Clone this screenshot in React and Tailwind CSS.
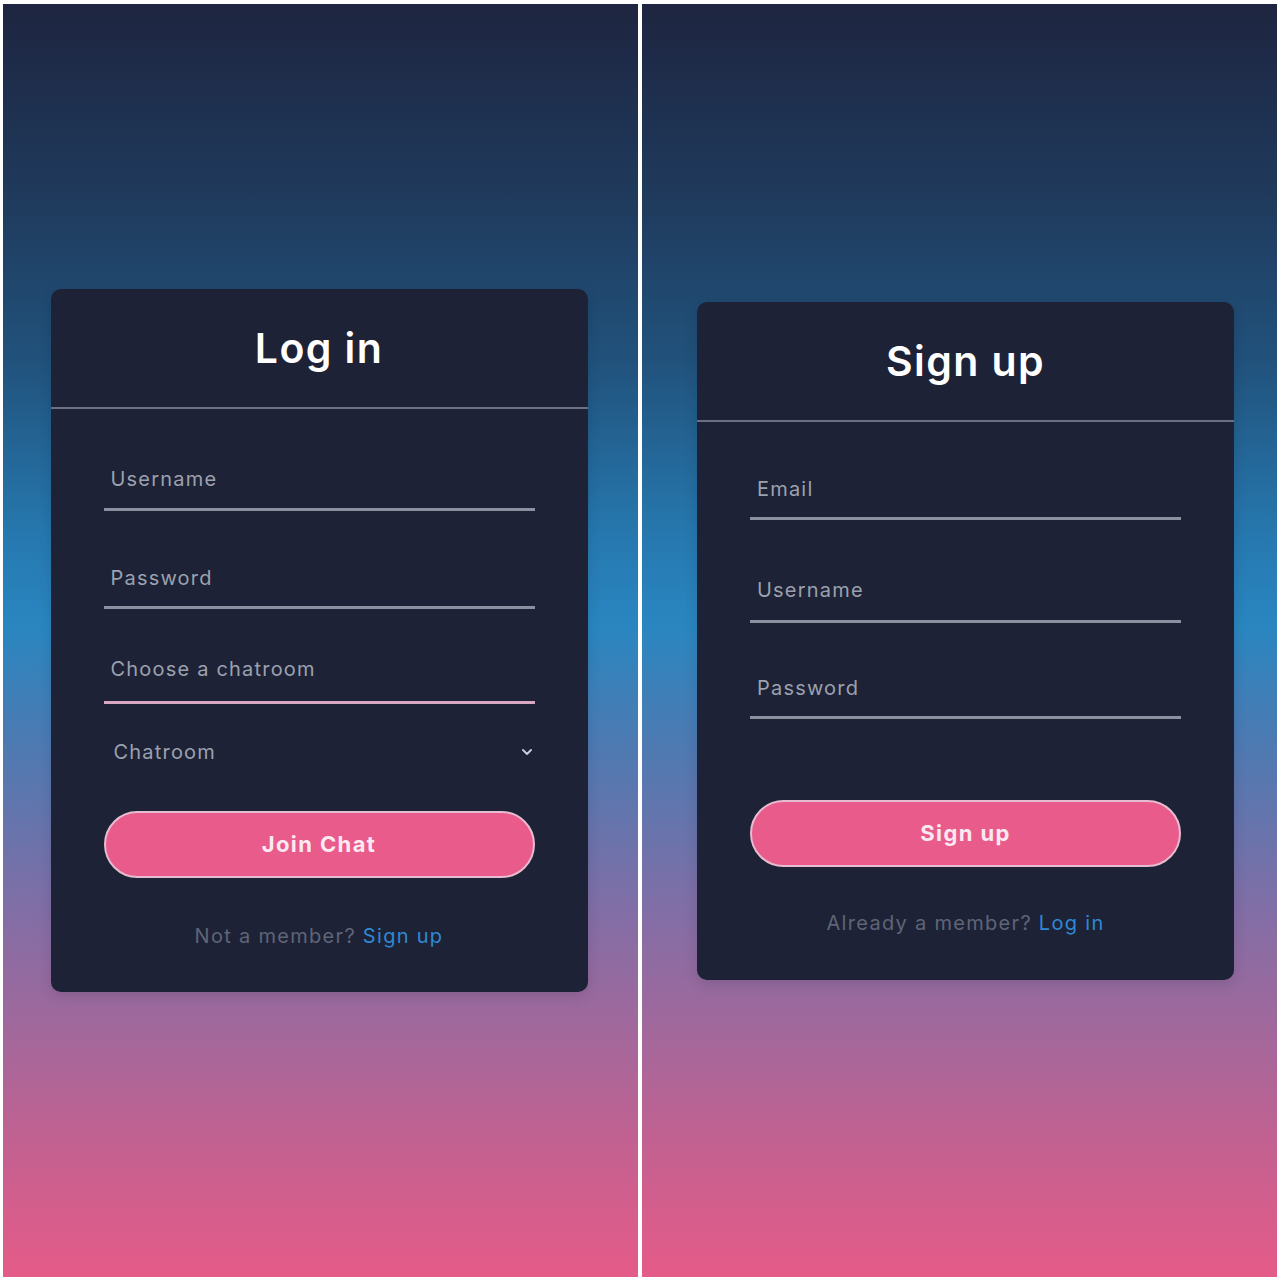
import { ChevronDown } from 'lucide-react'

const font = { fontFamily: 'Inter, "Noto Sans", sans-serif' }

function Field({ label, line = 'border-[#8b91a0]', className = '' }) {
  return (
    <div className={`pl-[7px] pb-[14px] border-b-[3px] ${line} ${className}`}>
      <span className="block text-[20px] leading-[28px] text-[#9ba1ae] tracking-[1.2px]">{label}</span>
    </div>
  )
}

function Panel({ children }) {
  return (
    <div className="flex-1 h-full flex items-center justify-center bg-[linear-gradient(to_bottom,#1e2540_0%,#1f3a5c_15%,#21527c_28%,#2679b0_42%,#2a86c0_49%,#4d7ab2_58%,#7d6fa7_70%,#a7679a_82%,#c8608f_91%,#e55b88_100%)]">
      {children}
    </div>
  )
}

function Card({ title, children, className = '' }) {
  return (
    <div className={`w-[537px] bg-[#1e2236] rounded-[10px] shadow-[0_4px_14px_rgba(0,0,0,0.12)] ${className}`}>
      <div className="h-[120px] pt-[2px] flex items-center justify-center border-b-2 border-[#6c7182]">
        <h1 className="text-[41px] font-semibold text-white tracking-[1.4px]">{title}</h1>
      </div>
      {children}
    </div>
  )
}

function PinkButton({ children }) {
  return (
    <button className="w-full h-[67px] rounded-full bg-[#e95b8b] border-2 border-[#e6bcd0] text-[22px] font-bold text-[#fbe9f1] tracking-[1.4px]">
      {children}
    </button>
  )
}

export default function App() {
  return (
    <div style={font} className="w-[1280px] h-[1280px] bg-white flex gap-[4px] pt-[4px] pl-[3px] pr-[3px] pb-[3px]">
      <Panel>
        <Card title="Log in" className="mr-[3px]">
          <div className="px-[53px] pt-[56px] pb-[42px]">
            <Field label="Username" className="pb-[15px]" />
            <Field label="Password" className="mt-[53px]" />
            <Field label="Choose a chatroom" className="mt-[46px] pb-[18px]" line="border-[#d8a7c1]" />
            <div className="mt-[34px] flex items-center justify-between pl-[10px]">
              <span className="text-[20px] leading-[28px] text-[#9ba1ae] tracking-[1.2px]">Chatroom</span>
              <ChevronDown className="w-[16px] h-[16px] text-[#c7cad3]" strokeWidth={3} />
            </div>
            <div className="mt-[45px]">
              <PinkButton>Join Chat</PinkButton>
            </div>
            <p className="mt-[44px] text-center text-[20px] leading-[28px] text-[#5e6576] tracking-[1.3px]">
              Not a member? <span className="text-[#2e88d4]">Sign up</span>
            </p>
          </div>
        </Card>
      </Panel>
      <Panel>
        <Card title="Sign up" className="ml-[12px]">
          <div className="px-[53px] pt-[53px] pb-[43px]">
            <Field label="Email" className="pb-[13px]" />
            <Field label="Username" className="mt-[56px] pb-[16px]" />
            <Field label="Password" className="mt-[51px]" />
            <div className="mt-[81px]">
              <PinkButton>Sign up</PinkButton>
            </div>
            <p className="mt-[42px] text-center text-[20px] leading-[28px] text-[#5e6576] tracking-[1.3px]">
              Already a member? <span className="text-[#2e88d4]">Log in</span>
            </p>
          </div>
        </Card>
      </Panel>
    </div>
  )
}
